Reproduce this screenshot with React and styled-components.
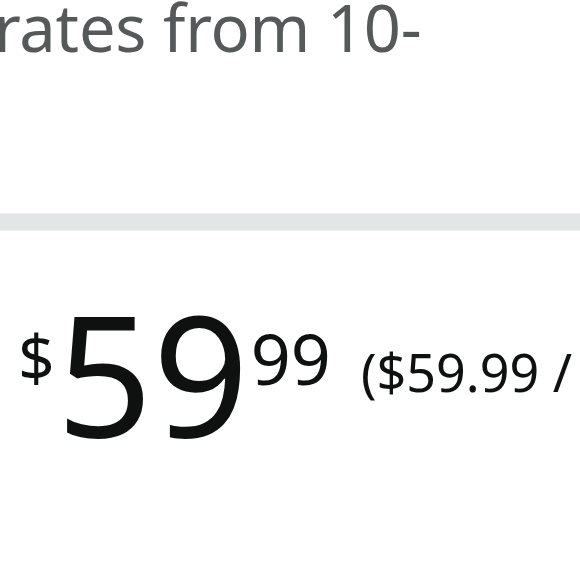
import styled, { createGlobalStyle } from "styled-components";

const GlobalStyle = createGlobalStyle`
  body {
    margin: 0;
    background: #ffffff;
    font-family: "Noto Sans", "Open Sans", Arial, sans-serif;
    overflow: hidden;
  }
`;

const Page = styled.div`
  width: 580px;
  height: 580px;
  overflow: hidden;
`;

const Description = styled.p`
  margin: -15px 0 0 -6px;
  font-size: 65px;
  line-height: 84px;
  letter-spacing: -0.2px;
  color: #565959;
  white-space: nowrap;
`;

const Divider = styled.div`
  margin-top: 144px;
  height: 18px;
  background: #e3e6e6;
  border-top: 1px solid #eef0f0;
  border-bottom: 1px solid #eef0f0;
  box-sizing: border-box;
`;

const PriceRow = styled.div`
  display: flex;
  align-items: flex-start;
  margin: 57px 0 0 18px;
  color: #0f1111;
  white-space: nowrap;
`;

const Symbol = styled.span`
  font-size: ${(p) => p.size}px;
  line-height: 1;
  margin-top: ${(p) => p.top}px;
  margin-left: ${(p) => p.gap || 0}px;
`;

const Whole = styled.span`
  margin-left: 2px;
  font-size: 168px;
  line-height: 1;
`;

const App = () => {
  return (
    <Page>
      <GlobalStyle />
      <Description>rates from 10-</Description>
      <Divider />
      <PriceRow>
        <Symbol size={64} top={37}>$</Symbol>
        <Whole>59</Whole>
        <Symbol size={70} top={35} gap={2}>99</Symbol>
        <Symbol size={52} top={58} gap={30}>($59.99 / count)</Symbol>
      </PriceRow>
    </Page>
  );
};

export default App;
